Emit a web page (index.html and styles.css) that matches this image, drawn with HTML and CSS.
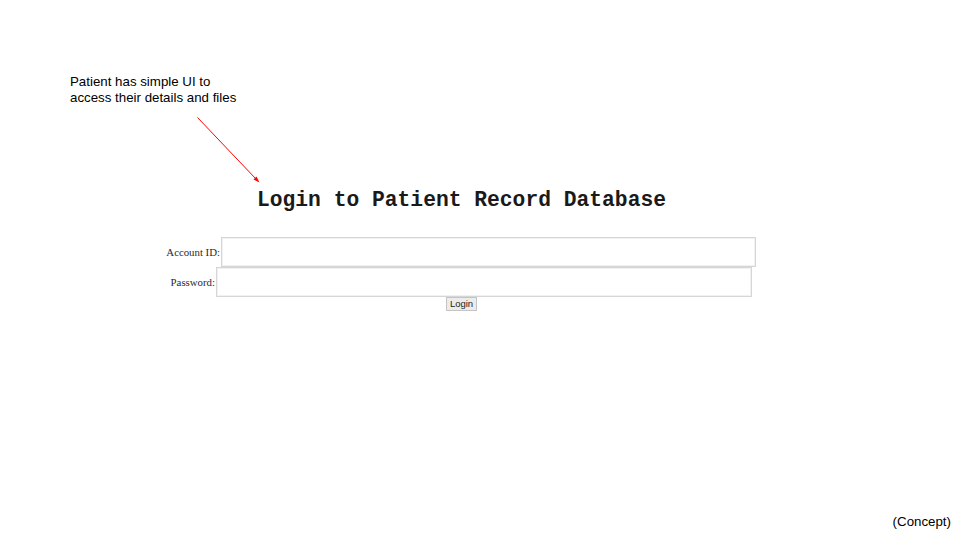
FILE: index.html
```html
<!DOCTYPE html>
<html>
<head>
<meta charset="utf-8">
<link rel="stylesheet" href="styles.css">
</head>
<body>
<div class="slide">
  <p class="note">Patient has simple UI to<br>access their details and files</p>
  <svg class="arrow" width="960" height="540" viewBox="0 0 960 540">
    <line x1="197.5" y1="117.5" x2="256" y2="179" stroke="#ff0000" stroke-width="1"/>
    <polygon points="259.5,182.5 253.5,179.5 256.5,176.5" fill="#ff0000"/>
  </svg>
  <h1 class="title">Login to Patient Record Database</h1>
  <form class="login">
    <div class="row row-account">
      <label class="label">Account ID:</label>
      <input class="field field-account" type="text">
    </div>
    <div class="row row-password">
      <label class="label">Password:</label>
      <input class="field field-password" type="password">
    </div>
    <div class="actions">
      <button class="btn" type="button">Login</button>
    </div>
  </form>
  <div class="footer">(Concept)</div>
</div>
</body>
</html>
```
FILE: styles.css
```css
html, body {
  margin: 0;
  padding: 0;
  background: #ffffff;
}

.slide {
  position: relative;
  width: 960px;
  height: 540px;
  display: flex;
  flex-direction: column;
  overflow: hidden;
}

.note {
  margin: 74px 0 0 70px;
  font-family: "Liberation Sans", Arial, sans-serif;
  font-size: 13.3px;
  line-height: 15.8px;
  color: #000;
}

.arrow {
  position: absolute;
  left: 0;
  top: 0;
  pointer-events: none;
}

.title {
  margin: 82px 0 0 257px;
  font-family: "Liberation Mono", "Courier New", monospace;
  font-weight: bold;
  font-size: 21.3px;
  line-height: 24px;
  color: #1a1a1a;
  white-space: nowrap;
}

.login {
  margin: 25px 0 0 0;
  display: flex;
  flex-direction: column;
}

.row {
  display: flex;
  align-items: center;
  height: 30px;
}

.label {
  font-family: "Liberation Serif", "Times New Roman", serif;
  font-size: 10.8px;
  color: #2a2a2a;
  text-align: right;
  padding-right: 1px;
}

.row-account .label {
  width: 220px;
}

.row-password .label {
  width: 215px;
}

.field {
  box-sizing: border-box;
  height: 30px;
  margin: 0;
  padding: 0 4px;
  border: 1px solid #d6d6d6;
  box-shadow: inset 0 0 0 1px #f1f1f1;
  background: #fff;
  outline: none;
}

.field-account {
  width: 535px;
}

.field-password {
  width: 536px;
}

.actions {
  display: flex;
  padding-left: 446px;
}

.btn {
  box-sizing: border-box;
  width: 31px;
  height: 14px;
  margin: 0;
  padding: 0;
  border: 1px solid #c4c4c4;
  background: #ececec;
  font-family: "Liberation Sans", Arial, sans-serif;
  font-size: 9.5px;
  line-height: 12px;
  color: #222;
}

.footer {
  margin-top: auto;
  padding: 0 9px 10px 0;
  text-align: right;
  font-family: "Liberation Sans", Arial, sans-serif;
  font-size: 13.3px;
  line-height: 16px;
  color: #000;
}
```
